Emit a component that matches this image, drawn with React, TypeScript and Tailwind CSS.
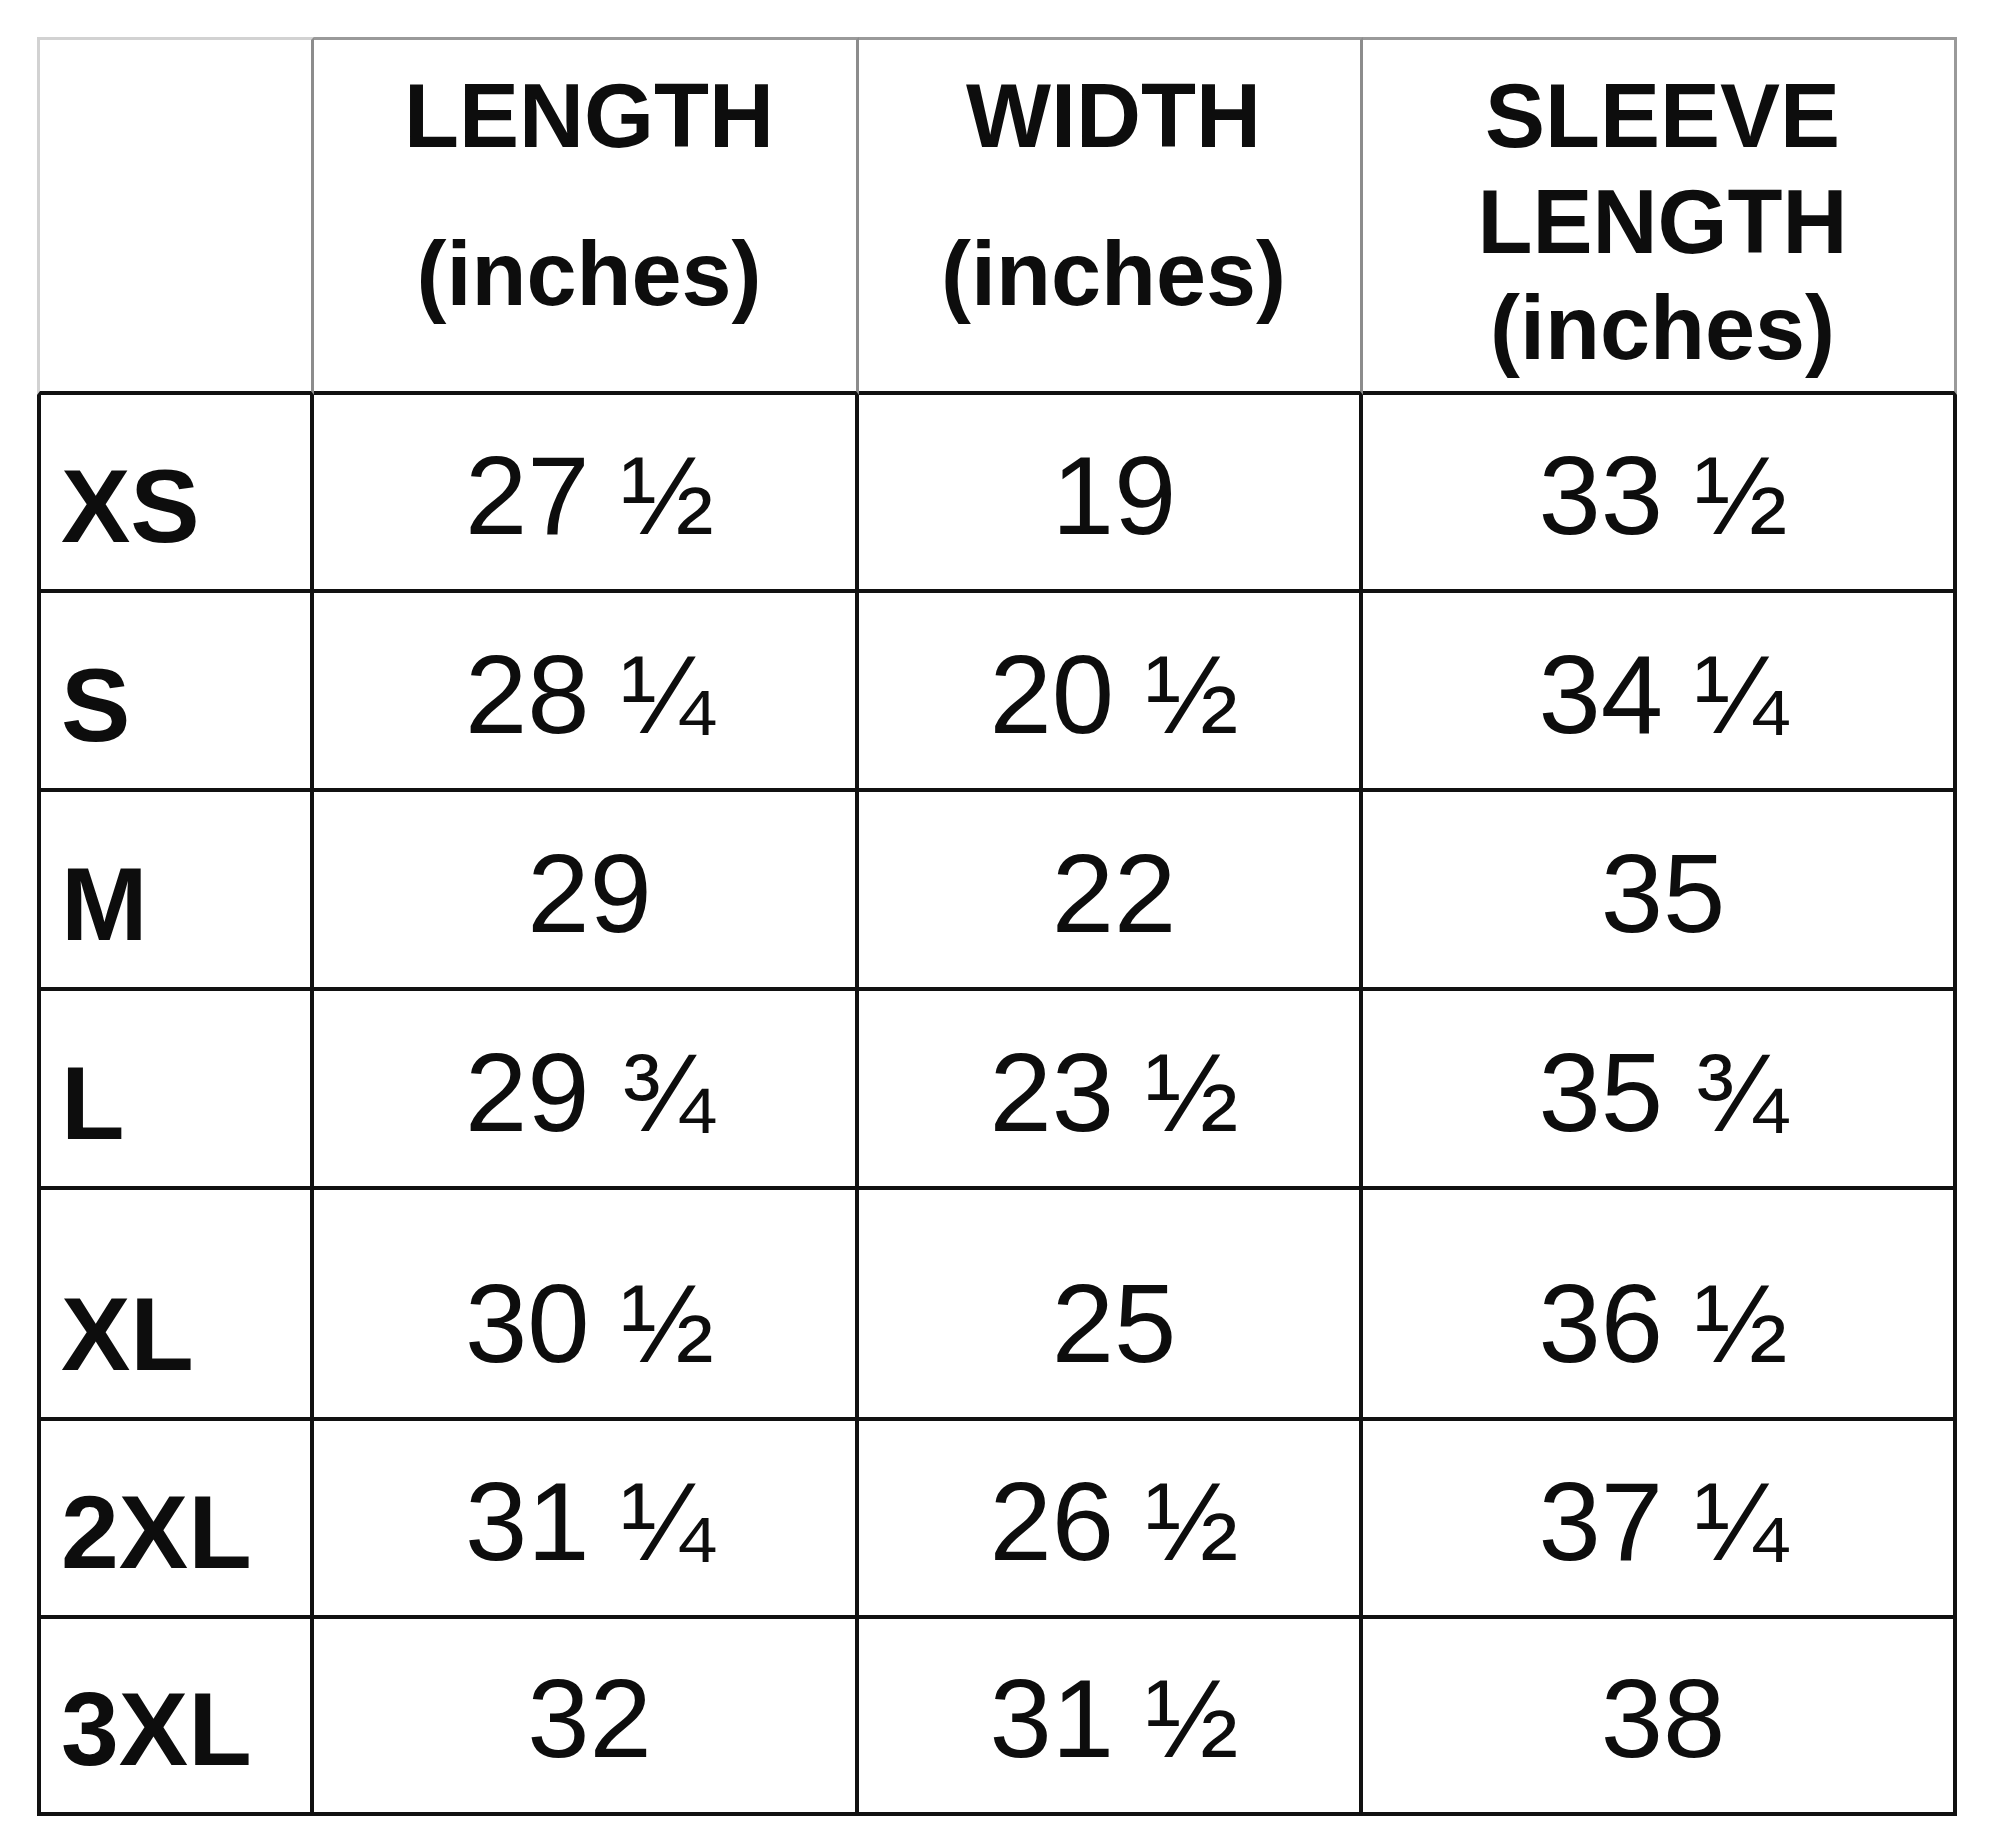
import React from "react";

const rows: { label: string; h: string; vals: string[] }[] = [
  { label: "XS", h: "h-[198px]", vals: ["27 ½", "19", "33 ½"] },
  { label: "S", h: "h-[199px]", vals: ["28 ¼", "20 ½", "34 ¼"] },
  { label: "M", h: "h-[199px]", vals: ["29", "22", "35"] },
  { label: "L", h: "h-[199px]", vals: ["29 ¾", "23 ½", "35 ¾"] },
  { label: "XL", h: "h-[231px]", vals: ["30 ½", "25", "36 ½"] },
  { label: "2XL", h: "h-[198px]", vals: ["31 ¼", "26 ½", "37 ¼"] },
  { label: "3XL", h: "h-[197px]", vals: ["32", "31 ½", "38"] },
];

const font = { fontFamily: '"Liberation Sans", Arial, sans-serif' };

export default function App() {
  return (
    <div className="bg-white w-[2000px] min-h-[1837px] pt-[37px] pl-[37px]" style={font}>
      <div className="grid grid-cols-[277px_545px_504px_594px] w-[1920px] text-[#0d0d0d]">
        {/* Header */}
        <div className="h-[358px] box-border border-t-[3px] border-l-[3px] border-r-[3px] border-b-[4px] border-t-[#d2d2d2] border-l-[#d2d2d2] border-r-[#8c8c8c] border-b-[#111]" />
        <div className="h-[358px] box-border border-t-[3px] border-r-[3px] border-b-[4px] border-t-[#9a9a9a] border-r-[#8c8c8c] border-b-[#111] flex flex-col items-center pt-[23px] pl-[8px] font-bold text-[90px] leading-[106px]">
          <div>LENGTH</div>
          <div className="mt-[52px]">(inches)</div>
        </div>
        <div className="h-[358px] box-border border-t-[3px] border-r-[3px] border-b-[4px] border-t-[#9a9a9a] border-r-[#8c8c8c] border-b-[#111] flex flex-col items-center pt-[23px] pl-[8px] font-bold text-[90px] leading-[106px]">
          <div>WIDTH</div>
          <div className="mt-[52px]">(inches)</div>
        </div>
        <div className="h-[358px] box-border border-t-[3px] border-r-[3px] border-b-[4px] border-t-[#9a9a9a] border-r-[#9a9a9a] border-b-[#111] flex flex-col items-center pt-[23px] pl-[8px] font-bold text-[90px] leading-[106px]">
          <div>SLEEVE</div>
          <div>LENGTH</div>
          <div>(inches)</div>
        </div>

        {rows.map((r) => (
          <React.Fragment key={r.label}>
            <div className={`${r.h} box-border border-l-[4px] border-r-[4px] border-b-[4px] border-[#111] flex items-end pl-[20px] pb-[31px] font-bold text-[104px] leading-none`}>
              {r.label}
            </div>
            {r.vals.map((v, i) => (
              <div
                key={i}
                className={`${r.h} box-border border-r-[4px] border-b-[4px] border-[#111] flex items-end justify-center pl-[10px] pb-[37px] text-[112px] leading-none`}
              >
                {v}
              </div>
            ))}
          </React.Fragment>
        ))}
      </div>
    </div>
  );
}
